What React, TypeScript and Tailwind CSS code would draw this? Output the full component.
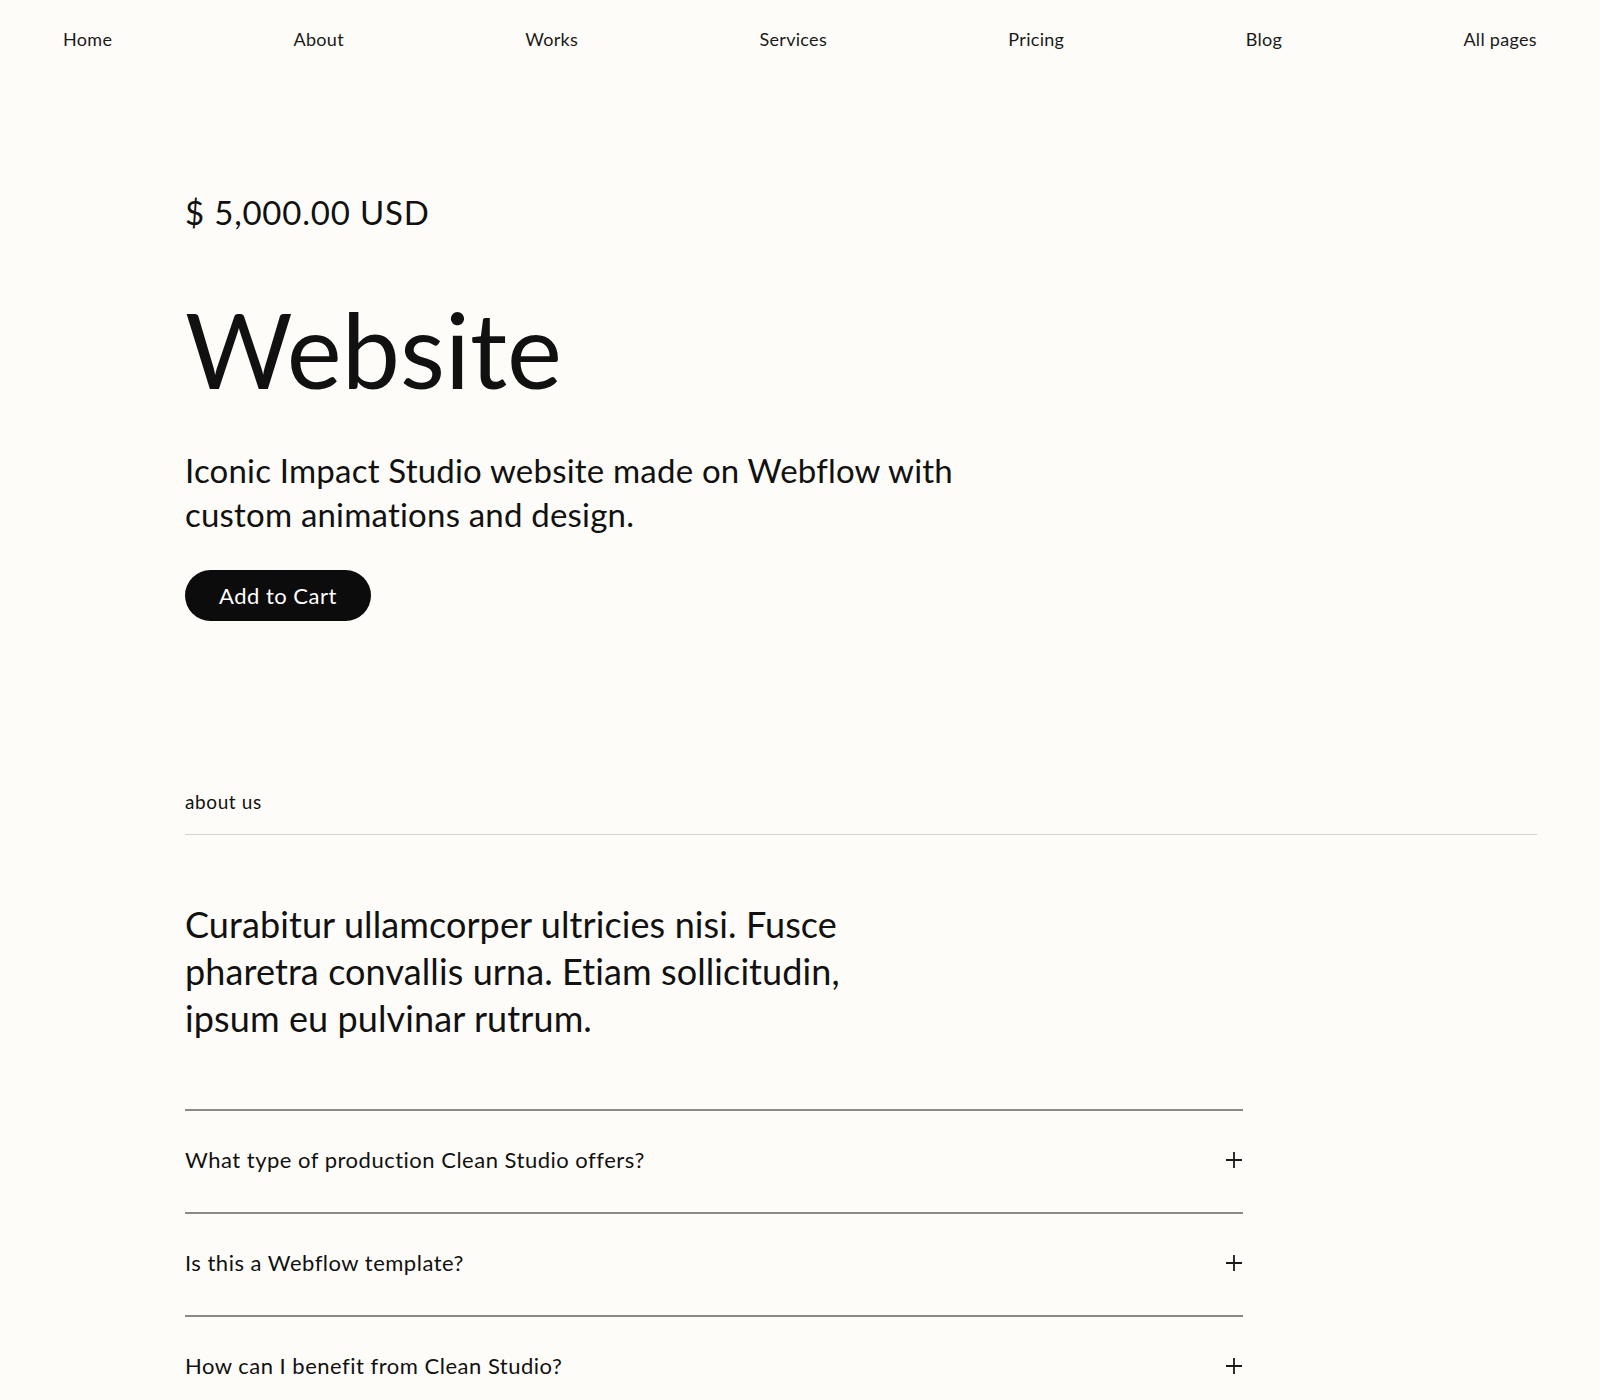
const navItems = ["Home", "About", "Works", "Services", "Pricing", "Blog", "All pages"];

const faqs = [
  "What type of production Clean Studio offers?",
  "Is this a Webflow template?",
  "How can I benefit from Clean Studio?",
];

function PlusIcon() {
  return (
    <svg width="18" height="18" viewBox="0 0 18 18" fill="none" className="shrink-0">
      <path d="M9 1v16M1 9h16" stroke="#1a1a1a" strokeWidth="1.8" />
    </svg>
  );
}

export default function App() {
  return (
    <div className="min-h-[1400px] bg-[#fdfcf8] text-[#111111] [font-family:Lato,'Noto_Sans',sans-serif]">
      <nav className="flex h-[78px] items-center justify-between px-[63px] text-[18px] tracking-[0.3px]">
        {navItems.map((item) => (
          <a key={item} href="#" className="text-[#1a1a1a]">
            {item}
          </a>
        ))}
      </nav>

      <main className="pl-[185px] pr-[63px]">
        <section className="pt-[115px]">
          <p className="text-[33px] leading-[38px] tracking-[0.8px]">$ 5,000.00 USD</p>
          <h1 className="mt-[66px] text-[104px] leading-[104px] tracking-[0px]">Website</h1>
          <p className="mt-[47px] max-w-[800px] text-[33px] leading-[44px] tracking-[0.2px]">
            Iconic Impact Studio website made on Webflow with custom animations and design.
          </p>
          <button className="mt-[34px] h-[51px] rounded-full bg-[#0c0c0c] px-[34px] text-[22px] tracking-[0.5px] text-white">
            Add to Cart
          </button>
        </section>

        <section className="mt-[167px]">
          <div className="border-b border-[#d3d2cd] pb-[19px]">
            <p className="text-[19px] leading-[27px] tracking-[0.6px]">about us</p>
          </div>
          <p className="mt-[66px] max-w-[720px] text-[36px] leading-[47px] tracking-[0.1px]">
            Curabitur ullamcorper ultricies nisi. Fusce pharetra convallis urna. Etiam sollicitudin,
            ipsum eu pulvinar rutrum.
          </p>

          <div className="mt-[67px] w-[1058px]">
            {faqs.map((q) => (
              <div
                key={q}
                className="flex items-center justify-between border-t-2 border-[#8c8a85] pt-[32px] pb-[36px]"
              >
                <span className="text-[22px] leading-[33px] tracking-[0.5px]">{q}</span>
                <PlusIcon />
              </div>
            ))}
          </div>
        </section>
      </main>
    </div>
  );
}
